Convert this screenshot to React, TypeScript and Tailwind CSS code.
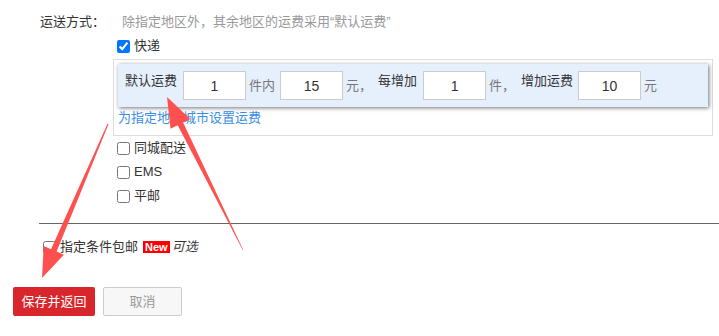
const FONT = "font-['Liberation_Sans','Noto_Sans_CJK_SC',sans-serif]";

function FeeInput({ value }: { value: string }) {
  return (
    <input
      readOnly
      value={value}
      className="w-[63px] h-[29px] border border-[#ccc] bg-white text-center text-[14px] text-[#333] outline-none"
    />
  );
}

function Check({ label, checked = false }: { label: React.ReactNode; checked?: boolean }) {
  return (
    <label className="flex items-center h-[24px] gap-[4px] ml-[4px]">
      <input type="checkbox" defaultChecked={checked} className="m-0 w-[13px] h-[13px]" />
      <span className="leading-[16px]">{label}</span>
    </label>
  );
}

function Arrows() {
  return (
    <svg className="absolute inset-0 pointer-events-none" width="719" height="336" viewBox="0 0 719 336">
      <polygon
        fill="#ff5050"
        points="167,97 190.3,119 183.1,122.6 243.4,250.2 242.6,249.8 177.7,125.2 170.5,128.8"
      />
      <polygon
        fill="#ff5050"
        points="42,278 43.7,246.1 51,249.2 107.5,123.8 108.5,124.2 56.6,251.6 63.9,254.7"
      />
    </svg>
  );
}

export default function App() {
  return (
    <div className={`relative w-[719px] h-[336px] overflow-hidden bg-white text-[13px] text-[#333] ${FONT}`}>
      <div className="flex pt-[14px]">
        <div className="w-[113px] pl-[40px] leading-[16px]">运送方式：</div>
        <div className="w-[600px]">
          <div className="pl-[9px] leading-[16px] text-[#999]">除指定地区外，其余地区的运费采用“默认运费”</div>
          <div className="mt-[8px] flex items-center h-[16px] gap-[4px] ml-[4px]">
            <input type="checkbox" defaultChecked className="m-0 w-[13px] h-[13px]" />
            <span className="leading-[16px]">快递</span>
          </div>

          <div className="mt-[5px] border border-[#ddd] p-[4px] pb-[9px]">
            <div className="flex items-start h-[43px] pt-[7px] pl-[7px] bg-[#e6f0fc] shadow-[1px_1px_4px_rgba(0,0,0,0.55)]">
              <span className="pt-[2px] leading-[16px]">默认运费</span>
              <span className="ml-[6px]"><FeeInput value="1" /></span>
              <span className="ml-[3px] mt-[7px] leading-[16px] text-[#777]">件内</span>
              <span className="ml-[5px]"><FeeInput value="15" /></span>
              <span className="ml-[3px] mt-[7px] leading-[16px] text-[#777]">元，</span>
              <span className="ml-[6px] pt-[2px] leading-[16px]">每增加</span>
              <span className="ml-[6px]"><FeeInput value="1" /></span>
              <span className="ml-[3px] mt-[7px] leading-[16px] text-[#777]">件，</span>
              <span className="ml-[6px] pt-[2px] leading-[16px]">增加运费</span>
              <span className="ml-[5px]"><FeeInput value="10" /></span>
              <span className="ml-[3px] mt-[7px] leading-[16px] text-[#777]">元</span>
            </div>
            <a className="block pt-[3px] leading-[16px] text-[#3a8ee6]">为指定地区城市设置运费</a>
          </div>

          <div className="flex flex-col">
            <Check label="同城配送" />
            <Check label="EMS" />
            <Check label="平邮" />
          </div>
        </div>
      </div>

      <div className="ml-[39px] mt-[15px] h-px bg-[#666]" />

      <div className="mt-[15px] ml-[43px] flex items-center h-[16px]">
        <input type="checkbox" className="m-0 w-[13px] h-[13px]" />
        <span className="ml-[4px] leading-[16px]">指定条件包邮</span>
        <span className="ml-[5px] h-[12px] px-[2px] bg-[#f00] text-white text-[11px] font-bold leading-[12px]">New</span>
        <span className="ml-[2px] italic leading-[16px]">可选</span>
      </div>

      <div className="mt-[32px] ml-[13px] flex gap-[8px]">
        <button className="w-[82px] h-[29px] rounded-[2px] bg-[#d9262c] text-white text-[13px]">保存并返回</button>
        <button className="w-[79px] h-[29px] rounded-[2px] border border-[#ccc] bg-[#f7f7f7] text-[#999] text-[13px]">取消</button>
      </div>

      <Arrows />
    </div>
  );
}
